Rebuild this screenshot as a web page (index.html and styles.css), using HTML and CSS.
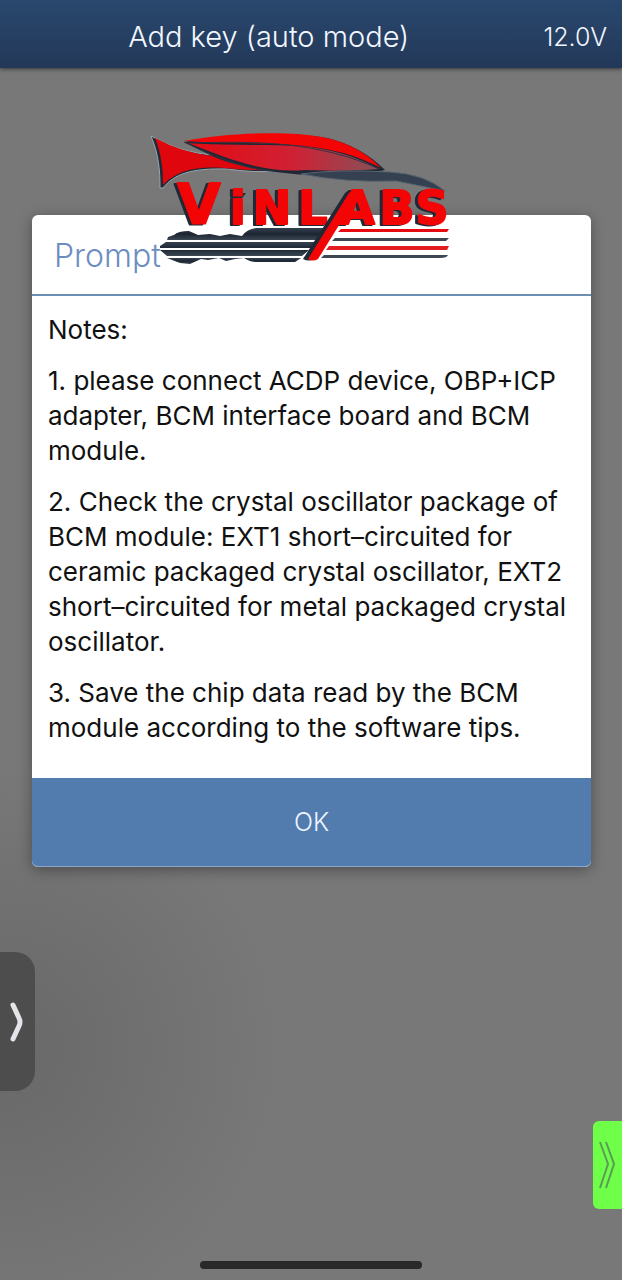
FILE: index.html
```html
<!DOCTYPE html>
<html lang="en">
<head>
<meta charset="utf-8">
<meta name="viewport" content="width=device-width, initial-scale=1">
<title>Add key (auto mode)</title>
<link rel="stylesheet" href="styles.css">
</head>
<body>
<div class="screen">
  <header class="topbar">
    <h1 class="topbar-title">Add key (auto mode)</h1>
    <span class="voltage">12.0V</span>
  </header>

  <main class="content">
    <section class="dialog" role="dialog" aria-labelledby="dialog-title">
      <h2 class="dialog-title" id="dialog-title">Prompt</h2>
      <div class="dialog-body">
        <p>Notes:</p>
        <p>1. please connect ACDP device, OBP+ICP<br>adapter, BCM interface board and BCM<br>module.</p>
        <p>2. Check the crystal oscillator package of<br>BCM module: EXT1 short–circuited for<br>ceramic packaged crystal oscillator, EXT2<br>short–circuited for metal packaged crystal<br>oscillator.</p>
        <p>3. Save the chip data read by the BCM<br>module according to the software tips.</p>
      </div>
      <button class="ok" type="button">OK</button>
      <svg class="logo" viewBox="0 0 310 140" role="img" aria-label="VinLabs">
        <defs>
          <linearGradient id="glass" x2="1"><stop stop-color="#e50a12"/><stop offset=".55" stop-color="#cf2134"/><stop offset="1" stop-color="#875158"/></linearGradient>
          <linearGradient id="steel" x2="0" y2="1"><stop stop-color="#354150"/><stop offset=".5" stop-color="#1c2431"/><stop offset="1" stop-color="#3c4754"/></linearGradient>
        </defs>
        <path d="M7 8C15 27 16 43 16 60L19 60C30 46 47 40 83 41Q112 45 134 43Q99 35 67 27Q35 24 7 8Z" fill="#202735" stroke="#9aa7af"/>
        <path d="M11 10C18 28 19 42 19 57C33 42 53 38 80 40Q110 43 130 42Q98 36 69 28Q39 25 11 10Z" fill="#df070d"/>
        <path d="M40 14C90 4 151 4 183 10Q217 18 241 42L236 43C179 54 99 43 68 28Z" fill="#202735"/>
        <path d="M44 15C80 18 118 16 157 18Q200 22 235 41C208 43 182 43 161 42C121 46 82 30 44 15Z" fill="url(#glass)"/>
        <path d="M40 13C85 4 148 3 178 9Q214 16 237 40C205 23 175 19 149 17C114 14 79 16 40 13Z" fill="#f30505"/>
        <path d="M40 14Q93 40 126 43M43 15C111 13 174 13 235 41" fill="none" stroke="#303444"/>
        <path d="M157 46Q192 41 246 44Q281 46 301 63Q277 58 252 53Q202 55 157 46Z" fill="#354151" stroke="#596571"/>
        <g fill="url(#steel)">
          <path d="M23 112L24 109L30 107Q34 103 45 103L54 107L66 106L76 108L86 106L98 108Q103 101 112 100H181L174 112Z"/>
          <path d="M16 118L22 114H173L168 120H16ZM16 122H165L158 128H23Z"/>
          <path d="M23 130H157L151 134H112Q106 134 100 130L91 131L82 133L75 130L64 132L57 131L46 136L36 135Z"/>
        </g>
        <path d="M87 65H102L96 73H86Z" fill="#202d3c"/>
        <text class="wordmark"><tspan class="initial" x="55" y="95">V</tspan><tspan x="94 128 169 213 253 288" y="96">iNLABS</tspan></text>
        <path d="M159 131L201 65Q205 60 212 65L170 131Q165 134 159 131Z" fill="#202735"/>
        <path d="M164 131L205 65Q209 60 215 65L174 131Q169 134 164 131Z" fill="#f40505"/>
        <path d="M197 101H305L303 104H194Z" fill="#e60b10"/>
        <path d="M191 110H305L302 113H188Z" fill="#3d4754"/>
        <path d="M185 118H305L303 122H182Z" fill="#e31d22"/>
        <path d="M180 127H304Q303 130 296 130H177Z" fill="#3d4754"/>
      </svg>
    </section>
  </main>

  <button class="drawer" type="button" aria-label="Open drawer">
    <svg class="drawer-icon" viewBox="0 0 14 40" aria-hidden="true"><path d="M3 3L9 16Q11 20 9 24L3 37" fill="none" stroke="#e5e5e9" stroke-width="5" stroke-linecap="round"/></svg>
  </button>
  <button class="quick" type="button" aria-label="Open quick panel">
    <svg class="quick-icon" viewBox="0 0 16 48" aria-hidden="true"><path d="M1 1L9 23L1 47M7 1L15 23L7 47" fill="none" stroke="#5b9b57" stroke-width="2"/></svg>
  </button>
  <footer class="home"><span class="home-bar"></span></footer>
</div>
</body>
</html>
```
FILE: styles.css
```css
* { box-sizing: border-box; }
body {
  margin: 0;
  font-family: Inter, "Noto Sans", sans-serif;
  color: #111;
}
button { border: 0; padding: 0; font: inherit; }
.screen {
  position: relative;
  min-height: 100vh;
  display: flex;
  flex-direction: column;
  overflow: hidden;
  background: radial-gradient(circle at 0 82%, #686868 0, #707070 140px, #787878 280px);
}
.topbar {
  display: grid;
  grid-template-columns: 1fr auto;
  align-items: center;
  height: 68px;
  padding: 6px 15px 0 0;
  color: #f2f7ff;
  background: linear-gradient(#29486e, #233858);
  box-shadow: 0 1px 4px #333;
}
.topbar-title {
  margin: 0;
  padding-right: 6px;
  font-size: 29px;
  font-weight: 300;
  line-height: 36px;
  text-align: center;
}
.voltage { font-size: 25px; font-weight: 300; line-height: 36px; }
.content { flex: 1; padding: 147px 31px 40px 32px; }
.dialog {
  position: relative;
  border-radius: 6px;
  background: #fff;
  box-shadow: 0 3px 14px rgba(0, 0, 0, .35);
}
.dialog-title {
  margin: 0;
  height: 81px;
  padding: 21px 22px;
  border-bottom: 2px solid #6d8eb3;
  color: #6c8dc0;
  font-size: 32px;
  font-weight: 300;
  line-height: 40px;
}
.dialog-body {
  padding: 16px 0 33px 16px;
  font-size: 26px;
  line-height: 35px;
}
.dialog-body p { margin: 0 0 16px; }
.dialog-body p:last-child { margin-bottom: 0; }
.ok {
  display: block;
  width: 100%;
  height: 89px;
  border-bottom: 1px solid #8ba6ca;
  border-radius: 0 0 6px 6px;
  color: #eef5ff;
  background: #527bae;
  font-size: 25px;
  font-weight: 300;
}
.logo {
  position: absolute;
  top: -87px;
  left: 50%;
  width: 310px;
  margin-left: -168px;
  overflow: visible;
}
.wordmark {
  font-family: "DejaVu Sans", sans-serif;
  font-size: 46px;
  font-weight: 700;
  text-anchor: middle;
  fill: #f40505;
  stroke: #f40505;
  stroke-width: 2px;
  stroke-linejoin: round;
  filter: drop-shadow(-3px 1px 0 #202735);
}
.initial { font-size: 56px; }
.drawer {
  position: absolute;
  top: 952px;
  left: 0;
  width: 35px;
  height: 139px;
  border-radius: 0 20px 20px 0;
  background: #4d4d4d;
}
.drawer-icon { display: block; width: 14px; margin-left: 10px; }
.quick {
  position: absolute;
  top: 1121px;
  right: 0;
  width: 29px;
  height: 88px;
  border-radius: 6px 0 0 6px;
  background: #70ff49;
}
.quick-icon { display: block; width: 16px; margin-left: 6px; }
.home { display: flex; justify-content: center; padding-bottom: 11px; }
.home-bar { width: 222px; height: 8px; border-radius: 4px; background: #292929; }
```
